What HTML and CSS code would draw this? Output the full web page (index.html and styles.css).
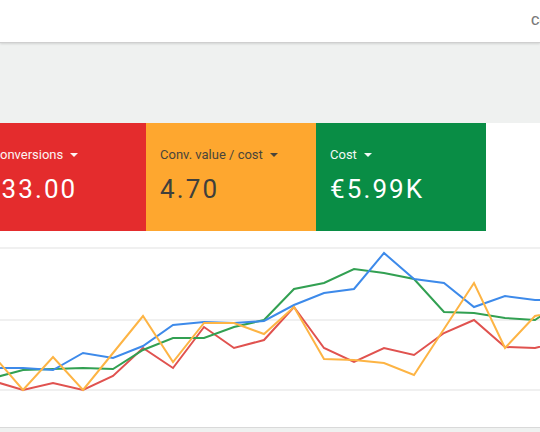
FILE: index.html
```html
<!DOCTYPE html>
<html lang="en">
<head>
<meta charset="utf-8">
<title>Overview</title>
<link rel="stylesheet" href="styles.css">
</head>
<body>
<div class="page">
  <header class="topbar"><span class="topbar-action">Columns</span></header>
  <section class="filters"></section>
  <section class="scorecards">
    <div class="card card-red">
      <div class="card-label">Conversions <span class="caret"></span></div>
      <div class="card-value card-value-indent">33.00</div>
    </div>
    <div class="card card-orange">
      <div class="card-label">Conv. value / cost <span class="caret"></span></div>
      <div class="card-value">4.70</div>
    </div>
    <div class="card card-green">
      <div class="card-label">Cost <span class="caret"></span></div>
      <div class="card-value">€5.99K</div>
    </div>
  </section>
  <section class="chart">
    <svg class="chart-svg" width="540" height="196" viewBox="0 231 540 196" preserveAspectRatio="none">
      <g class="grid">
        <line x1="0" y1="248" x2="540" y2="248"/>
        <line x1="0" y1="320" x2="540" y2="320"/>
        <line x1="0" y1="390" x2="540" y2="390"/>
      </g>
      <polyline class="s-red" points="-7,381 23,390 53,383 83,390 113,376 143,348 173,368 204,327 234,348 264,340 294,307 324,348 354,362 384,348 414,355 444,333 474,320 505,347 535,348 565,340"/>
      <polyline class="s-green" points="-7,378 23,370 53,369 83,368 113,369 143,350 173,338 204,338 234,327 264,320 294,289 324,283 354,269 384,273 414,279 444,312 474,313 505,318 535,320 565,300"/>
      <polyline class="s-blue" points="-7,368 23,368 53,370 83,353 113,358 143,346 173,325 204,322 234,323 264,321 294,305 324,293 354,289 384,253 414,279 444,283 474,307 505,296 535,300 565,300"/>
      <polyline class="s-yellow" points="-7,355 23,390 53,357 83,390 113,353 143,316 173,362 204,323 234,323 264,334 294,307 324,359 354,360 384,363 414,375 444,329 474,283 505,348 535,316 565,310"/>
    </svg>
  </section>
</div>
</body>
</html>
```

FILE: styles.css
```css
html, body {
  margin: 0;
  padding: 0;
}
body {
  background: #eff1f0;
  font-family: Roboto, "Liberation Sans", Arial, sans-serif;
  width: 540px;
  height: 432px;
  overflow: hidden;
}
.page {
  display: flex;
  flex-direction: column;
  width: 540px;
}
.topbar {
  height: 42px;
  background: #ffffff;
  border-bottom: 1px solid #cfcfcf;
  box-shadow: 0 1px 2px rgba(0, 0, 0, 0.12);
  display: flex;
  align-items: center;
  padding-left: 531px;
  box-sizing: content-box;
  overflow: hidden;
  white-space: nowrap;
  position: relative;
  z-index: 1;
}
.topbar-action {
  font-size: 13px;
  font-weight: 500;
  color: #7a7a7a;
  margin-top: -1px;
}
.filters {
  height: 80px;
  background: #eff1f0;
}
.scorecards {
  height: 108px;
  display: flex;
  background: #ffffff;
  overflow: hidden;
}
.card {
  flex: 0 0 170px;
  box-sizing: border-box;
  padding: 24px 14px 0 14px;
  overflow: hidden;
  white-space: nowrap;
}
.card-red {
  flex-basis: 168.5px;
  margin-left: -22.5px;
  background: #e42c2d;
  color: #ffffff;
}
.card-orange {
  background: #fea72f;
  color: #3f3f3c;
}
.card-green {
  background: #098d45;
  color: #ffffff;
}
.card-label {
  font-size: 13px;
  line-height: 16px;
  display: flex;
  align-items: center;
  opacity: 0.95;
}
.caret {
  display: inline-block;
  width: 0;
  height: 0;
  margin-left: 7px;
  border-left: 4.5px solid transparent;
  border-right: 4.5px solid transparent;
  border-top: 4.5px solid currentColor;
}
.card-value {
  margin-top: 11px;
  font-size: 26px;
  line-height: 30px;
  letter-spacing: 2.1px;
}
.card-value-indent {
  padding-left: 10px;
}
.chart {
  height: 196px;
  background: #ffffff;
  border-bottom: 1px solid #d9d9d9;
}
.chart-svg {
  display: block;
}
.grid line {
  stroke: #ebebeb;
  stroke-width: 1.6;
}
polyline {
  fill: none;
  stroke-width: 2;
  stroke-linejoin: miter;
}
.s-red { stroke: #e0524f; }
.s-green { stroke: #32a052; }
.s-blue { stroke: #3d8aea; }
.s-yellow { stroke: #fdb444; }
```
